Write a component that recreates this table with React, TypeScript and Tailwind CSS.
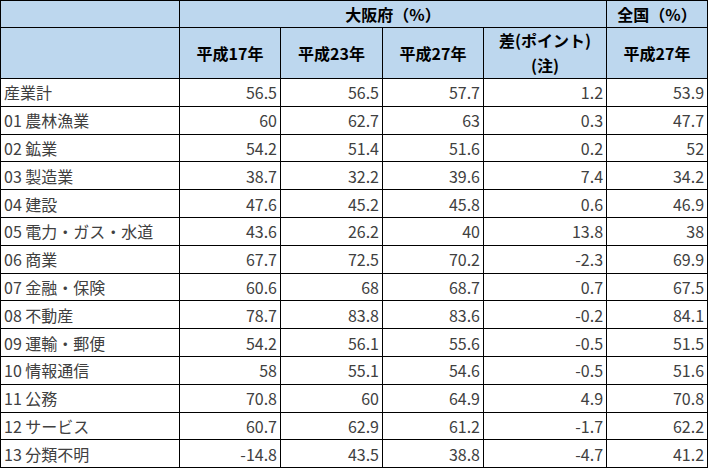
const rows: [string, string, string, string, string, string][] = [
  ["産業計", "56.5", "56.5", "57.7", "1.2", "53.9"],
  ["01 農林漁業", "60", "62.7", "63", "0.3", "47.7"],
  ["02 鉱業", "54.2", "51.4", "51.6", "0.2", "52"],
  ["03 製造業", "38.7", "32.2", "39.6", "7.4", "34.2"],
  ["04 建設", "47.6", "45.2", "45.8", "0.6", "46.9"],
  ["05 電力・ガス・水道", "43.6", "26.2", "40", "13.8", "38"],
  ["06 商業", "67.7", "72.5", "70.2", "-2.3", "69.9"],
  ["07 金融・保険", "60.6", "68", "68.7", "0.7", "67.5"],
  ["08 不動産", "78.7", "83.8", "83.6", "-0.2", "84.1"],
  ["09 運輸・郵便", "54.2", "56.1", "55.6", "-0.5", "51.5"],
  ["10 情報通信", "58", "55.1", "54.6", "-0.5", "51.6"],
  ["11 公務", "70.8", "60", "64.9", "4.9", "70.8"],
  ["12 サービス", "60.7", "62.9", "61.2", "-1.7", "62.2"],
  ["13 分類不明", "-14.8", "43.5", "38.8", "-4.7", "41.2"],
];

const head = "border border-black bg-[#bdd7ee] font-bold text-black text-center";
const cell = "border border-black h-[27.8px] px-[3px] py-0 leading-none text-[#404040]";

export default function App() {
  return (
    <div className="w-[709px] h-[472px] bg-white overflow-hidden font-['Noto_Sans_CJK_JP','Noto_Sans',sans-serif] text-[16px]">
      <table className="border-collapse table-fixed w-[707px]">
        <colgroup>
          <col className="w-[179px]" />
          <col className="w-[101px]" />
          <col className="w-[102px]" />
          <col className="w-[101px]" />
          <col className="w-[123px]" />
          <col className="w-[101px]" />
        </colgroup>
        <thead>
          <tr className="h-[27px]">
            <th className={`${head} leading-none`} />
            <th colSpan={4} className={`${head} leading-none`}>大阪府（%）</th>
            <th className={`${head} leading-none`}>全国（%）</th>
          </tr>
          <tr className="h-[51px]">
            <th className={`${head} leading-none`} />
            <th className={`${head} leading-none`}>平成17年</th>
            <th className={`${head} leading-none`}>平成23年</th>
            <th className={`${head} leading-none`}>平成27年</th>
            <th className={`${head} leading-[25px]`}>
              差(ポイント)
              <br />
              (注)
            </th>
            <th className={`${head} leading-none`}>平成27年</th>
          </tr>
        </thead>
        <tbody>
          {rows.map((r) => (
            <tr key={r[0]}>
              <td className={`${cell} text-left`}>{r[0]}</td>
              {r.slice(1).map((v, i) => (
                <td key={i} className={`${cell} text-right`}>
                  {v}
                </td>
              ))}
            </tr>
          ))}
        </tbody>
      </table>
    </div>
  );
}
